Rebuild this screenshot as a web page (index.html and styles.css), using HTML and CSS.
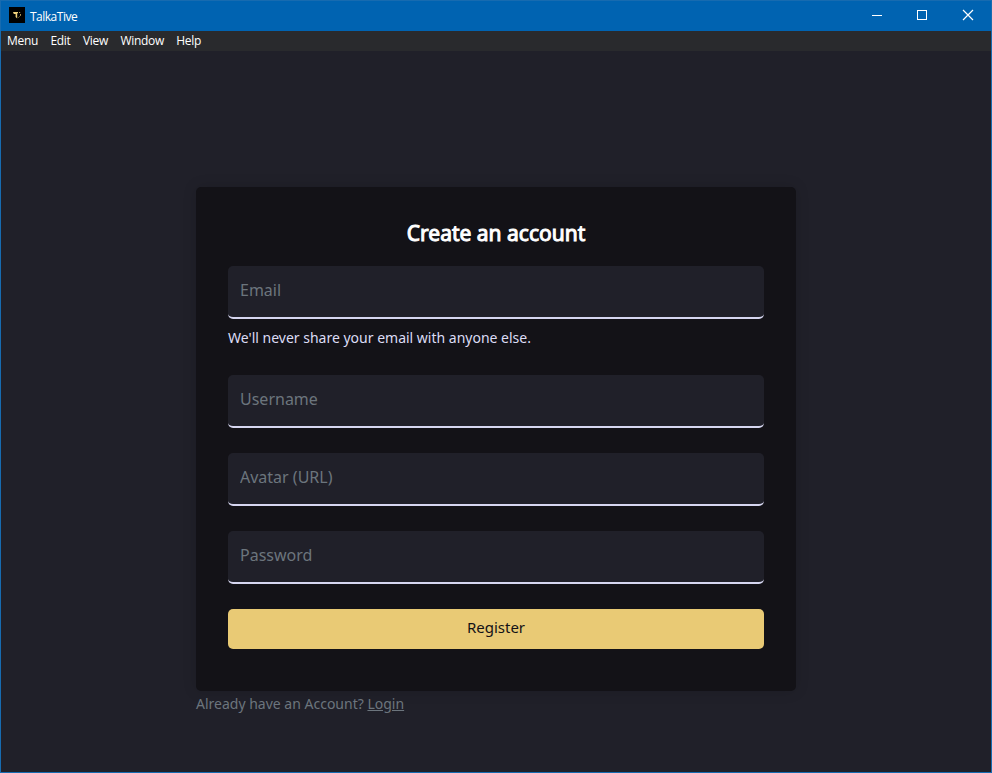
FILE: index.html
```
<!DOCTYPE html>
<html lang="en">
<head>
<meta charset="utf-8">
<title>TalkaTive</title>
<link rel="stylesheet" href="styles.css">
</head>
<body>
<div class="window">
  <header class="titlebar">
    <svg class="app-icon" viewBox="0 0 16 16" width="16" height="16" aria-hidden="true">
      <rect width="16" height="16" fill="#000"/>
      <path d="M4 5H9V6.3H8.2V11.5L6.6 10V7H4.8Z" fill="#f0d27c"/>
      <path d="M10 5.5h1.2M11.5 7v1.8M10.5 9.5l-1 1" fill="none" stroke="#b59a55" stroke-width="1"/>
    </svg>
    <span class="app-name">TalkaTive</span>
    <div class="controls">
      <svg class="control" viewBox="0 0 46 30" width="46" height="30"><path d="M16 14.5h10" stroke="#fff"/></svg>
      <svg class="control" viewBox="0 0 46 30" width="46" height="30"><rect x="16.5" y="9.5" width="9" height="9" fill="none" stroke="#fff"/></svg>
      <svg class="control" viewBox="0 0 46 30" width="46" height="30"><path d="M16 9l10 10M26 9l-10 10" stroke="#fff" stroke-width="1.2"/></svg>
    </div>
  </header>
  <nav class="menubar">
    <span>Menu</span><span>Edit</span><span>View</span><span>Window</span><span>Help</span>
  </nav>
  <main class="page">
    <form class="card">
      <h1 class="title">Create an account</h1>
      <input class="field" type="email" placeholder="Email">
      <p class="hint">We'll never share your email with anyone else.</p>
      <input class="field" type="text" placeholder="Username">
      <input class="field" type="text" placeholder="Avatar (URL)">
      <input class="field" type="password" placeholder="Password">
      <button class="submit" type="button">Register</button>
    </form>
    <p class="signin">Already have an Account? <a href="#">Login</a></p>
  </main>
</div>
</body>
</html>
```
FILE: styles.css
```
* { box-sizing: border-box; }
body {
  margin: 0;
  font-family: "Noto Sans", sans-serif;
  background: #202029;
}
.window {
  height: 773px;
  border: 1px solid #176bb0;
  background: #202029;
  display: flex;
  flex-direction: column;
}
.titlebar {
  height: 30px;
  background: #0063b1;
  display: flex;
  align-items: center;
  padding-left: 8px;
  color: #fff;
  font: 12px "Open Sans", sans-serif;
}
.app-icon { margin-top: -2px; }
.app-name { margin-left: 5px; letter-spacing: -0.5px; }
.controls { margin-left: auto; margin-right: -2px; display: flex; }
.control { display: block; }
.control:first-child { margin-right: -1px; }
.menubar {
  height: 20px;
  background: #292a2d;
  display: flex;
  align-items: center;
  gap: 12.4px;
  padding: 0 0 1px 6px;
  color: #fff;
  font: 12px "Open Sans", sans-serif;
  letter-spacing: -0.3px;
}
.page {
  width: 600px;
  margin: 136px auto 0;
}
.card {
  height: 504px;
  padding: 31px 32px 32px;
  border-radius: 5px;
  background: #131217;
  box-shadow: 0 0 14px rgba(0, 0, 0, 0.15);
  display: flex;
  flex-direction: column;
}
.title {
  margin: 0 0 18px;
  color: #fff;
  font-size: 21px;
  line-height: 30px;
  font-weight: 400;
  -webkit-text-stroke: 1px #fff;
  text-align: center;
}
.field {
  width: 100%;
  height: 53px;
  flex: none;
  margin-bottom: 25px;
  padding: 0 12px 3px;
  border: 0;
  border-bottom: 2px solid #d6d6f0;
  border-radius: 5px;
  background: #202029;
  color: #fff;
  font: 16px "Noto Sans", sans-serif;
}
.field::placeholder { color: #6c757d; opacity: 1; }
.hint {
  margin: -17px 0 27px;
  color: #dcdcf5;
  font-size: 14px;
  line-height: 21px;
}
.submit {
  height: 40px;
  flex: none;
  padding: 0 0 4px;
  border: 0;
  border-radius: 5px;
  background: #e9ca75;
  color: #131217;
  font: 15px "Noto Sans", sans-serif;
}
.signin {
  margin: 2px 0 0;
  color: #6c757d;
  font-size: 14px;
  line-height: 21px;
}
.signin a { color: inherit; text-decoration: underline; }
```
